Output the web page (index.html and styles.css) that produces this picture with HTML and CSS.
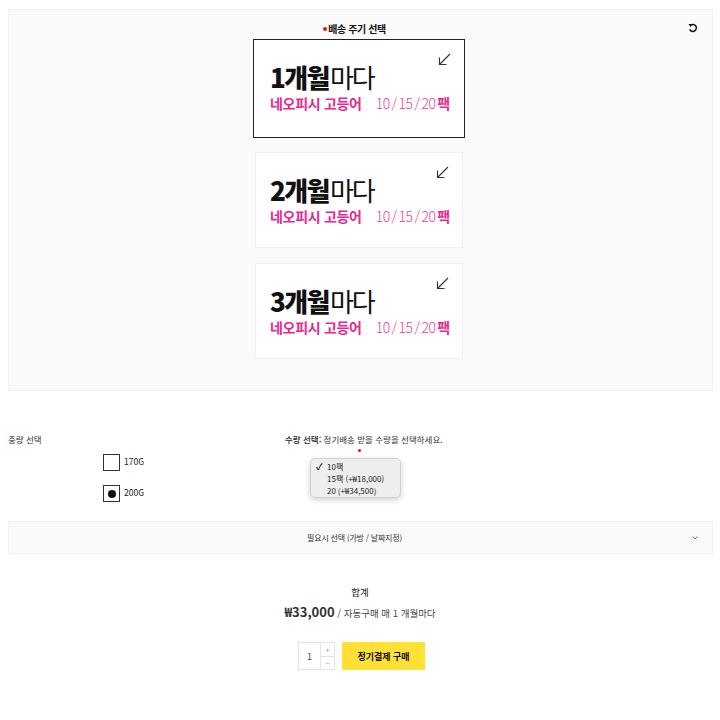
FILE: index.html
```html
<!DOCTYPE html>
<html lang="ko">
<head>
<meta charset="utf-8">
<link rel="stylesheet" href="styles.css">
</head>
<body>
<section class="panel">
  <h2 class="panel-title"><span class="dot"></span>배송 주기 선택</h2>
  <svg class="refresh" width="10" height="10" viewBox="0 0 10 10"><path d="M2.4 2.4 A3.5 3.5 0 1 1 1.7 6.4" fill="none" stroke="#111" stroke-width="1.5"/><path d="M0.5 1 L3.9 1.1 L2.6 4.3 Z" fill="#111"/></svg>
  <div class="cards">
    <div class="card selected">
      <svg class="arrow" width="13" height="13" viewBox="0 0 13 13"><path d="M12 1 L1.5 11.5 M1.5 4.5 V11.5 H8.5" fill="none" stroke="#333" stroke-width="1.1"/></svg>
      <div class="period"><b>1개월</b>마다</div>
      <div class="product"><b>네오피시 고등어</b><span class="packs">10 / 15 / 20 <b>팩</b></span></div>
    </div>
    <div class="card">
      <svg class="arrow" width="13" height="13" viewBox="0 0 13 13"><path d="M12 1 L1.5 11.5 M1.5 4.5 V11.5 H8.5" fill="none" stroke="#333" stroke-width="1.1"/></svg>
      <div class="period"><b>2개월</b>마다</div>
      <div class="product"><b>네오피시 고등어</b><span class="packs">10 / 15 / 20 <b>팩</b></span></div>
    </div>
    <div class="card">
      <svg class="arrow" width="13" height="13" viewBox="0 0 13 13"><path d="M12 1 L1.5 11.5 M1.5 4.5 V11.5 H8.5" fill="none" stroke="#333" stroke-width="1.1"/></svg>
      <div class="period"><b>3개월</b>마다</div>
      <div class="product"><b>네오피시 고등어</b><span class="packs">10 / 15 / 20 <b>팩</b></span></div>
    </div>
  </div>
</section>

<section class="options">
  <div class="weight">
    <div class="label">중량 선택</div>
    <div class="choices">
      <label class="choice"><span class="box"></span><span>170G</span></label>
      <label class="choice"><span class="box on"><span class="fill"></span></span><span>200G</span></label>
    </div>
  </div>
  <div class="qty">
    <div class="label"><b>수량 선택:</b> 정기배송 받을 수량을 선택하세요.</div>
    <span class="req"></span>
    <div class="menu">
      <div class="item"><span class="check">✓</span>10팩</div>
      <div class="item">15팩 (+₩18,000)</div>
      <div class="item">20 (+₩34,500)</div>
    </div>
  </div>
</section>

<div class="accordion">
  <span>필요시 선택 (가방 / 날짜지정)</span>
  <svg class="chev" width="6" height="4" viewBox="0 0 6 4"><path d="M0.5 0.5 L3 3 L5.5 0.5" fill="none" stroke="#666" stroke-width="0.9"/></svg>
</div>

<section class="total">
  <div class="total-label">합계</div>
  <div class="total-price"><b>₩33,000</b> / 자동구매 매 1 개월마다</div>
  <div class="buy">
    <div class="stepper">
      <span class="num">1</span>
      <span class="btns"><span>+</span><span>−</span></span>
    </div>
    <button class="buy-btn">정기결제 구매</button>
  </div>
</section>
</body>
</html>
```

FILE: styles.css
```css
* { box-sizing: border-box; }
body {
  margin: 0;
  background: #fff;
  font-family: "Noto Sans CJK KR", "Noto Sans", sans-serif;
  color: #222;
}
.panel {
  position: relative;
  margin: 9px 7px 0 8px;
  height: 382px;
  background: #fafafa;
  border: 1px solid #f1f1f1;
  padding-top: 11px;
  display: flex;
  flex-direction: column;
  align-items: center;
}
.panel-title {
  margin: 0 12px 0 0;
  font-size: 10px;
  line-height: 15px;
  font-weight: 700;
  color: #111;
  letter-spacing: -0.4px;
  display: flex;
  align-items: center;
}
.dot {
  width: 4px; height: 4px; border-radius: 50%;
  background: #e8131d;
  margin-right: 1px;
}
.refresh { position: absolute; right: 14px; top: 13px; }
.cards {
  margin-top: 3px;
  margin-right: 3px;
  display: flex;
  flex-direction: column;
  align-items: center;
  gap: 14px;
}
.card {
  position: relative;
  width: 208px;
  height: 96px;
  background: #fff;
  border: 1px solid #f0f0f0;
  padding: 20px 0 0 14px;
}
.card + .card + .card { margin-top: 1px; }
.card.selected {
  width: 212px;
  height: 99px;
  border: 1px solid #222;
  padding: 20px 0 0 16px;
}
.arrow { position: absolute; right: 13px; top: 13px; }
.period {
  font-size: 26px;
  line-height: 34px;
  color: #111;
  letter-spacing: -2px;
}
.period b { font-weight: 900; letter-spacing: -1.6px; margin-right: 1px; }
.product {
  margin-top: 0;
  font-size: 14px;
  line-height: 18px;
  color: #e8288f;
  letter-spacing: -0.3px;
}
.product b { font-weight: 700; }
.packs {
  margin-left: 14px;
  font-weight: 300;
  color: #ee3d9b;
  word-spacing: -1.5px;
  letter-spacing: -0.5px;
}
.packs b { font-weight: 700; color: #e8288f; margin-left: 0; }

.options {
  display: flex;
  padding: 0 8px;
  margin-top: 42px;
  height: 88px;
}
.weight { width: 277px; }
.label {
  font-size: 8.5px;
  line-height: 13px;
  color: #333;
}
.label b { font-weight: 500; color: #222; }
.choices {
  margin: 9px 0 0 95px;
  display: flex;
  flex-direction: column;
  gap: 15px;
}
.choice {
  display: flex;
  align-items: flex-start;
  gap: 4px;
  font-size: 8.5px;
  line-height: 12px;
  color: #222;
}
.box {
  width: 17px; height: 17px;
  border: 1px solid #333;
  display: flex; align-items: center; justify-content: center;
  margin-top: -1px;
}
.fill { width: 8px; height: 8px; border-radius: 50%; background: #111; }
.qty { position: relative; }
.req {
  display: block;
  width: 3px; height: 3px; border-radius: 50%;
  background: #e8131d;
  margin: 3px 0 0 73px;
}
.menu {
  margin: 6px 0 0 25px;
  width: 91px;
  height: 40px;
  background: #eeeeee;
  border: 1px solid #d2d2d2;
  border-radius: 5px;
  box-shadow: 0 2px 6px rgba(0,0,0,0.18);
  padding: 2px 0 0 16px;
}
.item {
  position: relative;
  font-size: 8px;
  line-height: 12px;
  color: #222;
}
.check {
  position: absolute;
  left: -11px;
  font-size: 9px;
  font-weight: 700;
}

.accordion {
  position: relative;
  margin: 0 7px 0 8px;
  height: 33px;
  background: #fafafa;
  border: 1px solid #f1f1f1;
  display: flex;
  align-items: center;
  justify-content: center;
  padding-right: 12px;
  font-size: 8px;
  color: #333;
  letter-spacing: -0.2px;
}
.chev { position: absolute; right: 14px; top: 14px; }

.total {
  display: flex;
  flex-direction: column;
  align-items: center;
  margin-top: 31px;
}
.total-label { font-size: 9.5px; line-height: 14px; color: #222; }
.total-price {
  margin-top: 4px;
  font-size: 9.5px;
  line-height: 17px;
  color: #444;
}
.total-price b { font-size: 13px; font-weight: 700; color: #333; }
.buy {
  margin-top: 20px;
  margin-left: 3px;
  display: flex;
  gap: 7px;
}
.stepper {
  width: 37px; height: 28px;
  border: 1px solid #e4e4e4;
  display: flex;
}
.num {
  flex: 1;
  display: flex; align-items: center; justify-content: center;
  font-size: 9px; color: #444;
  border-right: 1px solid #e4e4e4;
}
.btns { width: 13px; display: flex; flex-direction: column; }
.btns span {
  flex: 1;
  display: flex; align-items: center; justify-content: center;
  font-size: 8px; color: #aaa;
}
.btns span + span { border-top: 1px solid #e4e4e4; }
.buy-btn {
  width: 83px; height: 28px;
  border: 0;
  background: #ffe135;
  font-family: inherit;
  font-size: 9px;
  font-weight: 700;
  color: #111;
  padding: 0;
}
```
